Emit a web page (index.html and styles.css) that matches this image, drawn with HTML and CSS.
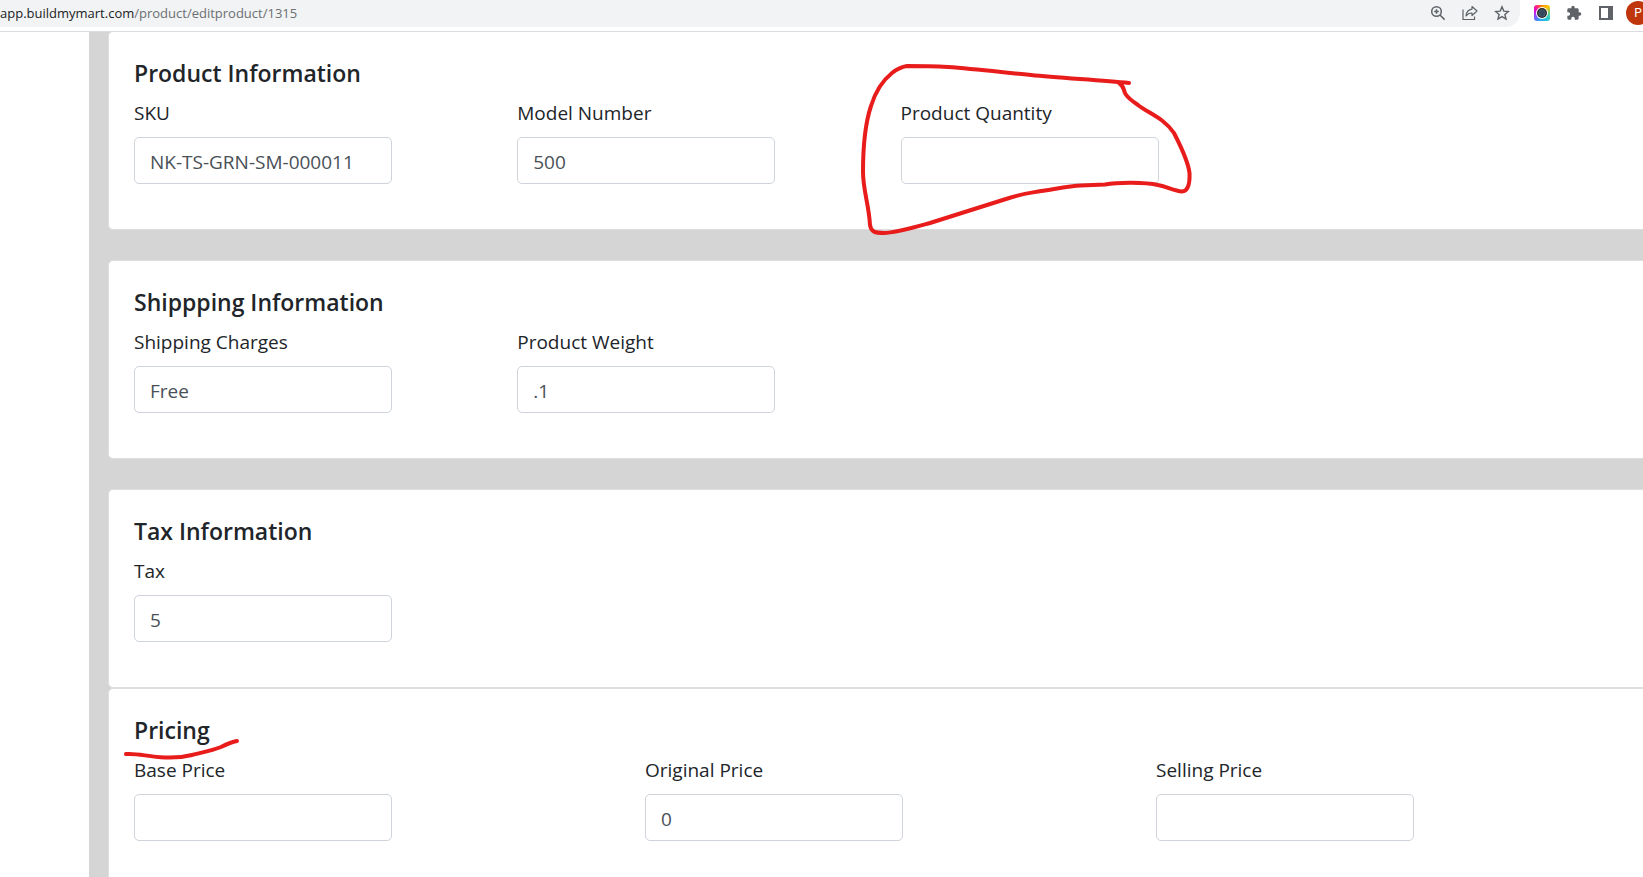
FILE: index.html
```html
<!DOCTYPE html>
<html lang="en">
<head>
  <meta charset="UTF-8">
  <meta name="viewport" content="width=device-width, initial-scale=1.0">
  <title>Edit Product</title>
  <link rel="stylesheet" href="styles.css">
</head>
<body>
  <header class="toolbar">
    <div class="address-bar">
      <div class="url">app.buildmymart.com<span class="url-path">/product/editproduct/1315</span></div>
      <button class="icon-btn" type="button" aria-label="Zoom">
        <svg width="16" height="16" viewBox="0 0 16 16" fill="none" stroke="#5f6368" stroke-width="1.5">
          <circle cx="6.5" cy="6.5" r="4.8"/>
          <path d="M10 10l4.6 4.6M4.2 6.5h4.6M6.5 4.2v4.6"/>
        </svg>
      </button>
      <button class="icon-btn" type="button" aria-label="Share">
        <svg width="16" height="16" viewBox="0 0 16 16" fill="none" stroke="#5f6368" stroke-width="1.2">
          <path d="M1 4.500v10h11.500v-3"/>
          <path d="M10 1.500l5 4.500-5 4.500V8C7.500 8 5.500 8.800 4 11 4.300 7.200 6.400 4.600 10 4.100z" stroke-linejoin="round"/>
        </svg>
      </button>
      <button class="icon-btn" type="button" aria-label="Bookmark">
        <svg width="16" height="16" viewBox="0 0 16 16" fill="none" stroke="#5f6368" stroke-width="1.4">
          <path d="M8 1.900l1.800 4.200 4.600.4-3.500 3 1.100 4.500L8 11.600 4 14l1.100-4.500-3.500-3 4.600-.4z"/>
        </svg>
      </button>
    </div>
    <div class="extensions">
      <button class="icon-btn" type="button" aria-label="Screen capture">
        <span class="capture-icon">
          <svg width="12" height="12" viewBox="0 0 12 12">
            <circle cx="6" cy="6" r="6" fill="#fff"/>
            <circle cx="6" cy="6" r="5" fill="#222"/>
            <circle cx="6" cy="6" r="3.500" fill="#34495e" stroke="#6b7780" stroke-width=".5"/>
          </svg>
        </span>
      </button>
      <button class="icon-btn" type="button" aria-label="Extensions">
        <svg width="16" height="16" viewBox="0 0 24 24" fill="#5f6368">
          <path d="M20.500 11H19V7c0-1.100-.9-2-2-2h-4V3.500a2.500 2.500 0 0 0-5 0V5H4c-1.100 0-2 .9-2 2v3.800h1.500a2.700 2.700 0 0 1 0 5.400H2V20c0 1.100.9 2 2 2h3.800v-1.500a2.700 2.700 0 0 1 5.400 0V22H17c1.100 0 2-.9 2-2v-4h1.500a2.500 2.500 0 0 0 0-5z"/>
        </svg>
      </button>
      <button class="icon-btn" type="button" aria-label="Side panel">
        <svg width="14" height="14" viewBox="0 0 14 14">
          <path d="M0 0h14v14H0zM2 2v10h7V2z" fill="#5f6368" fill-rule="evenodd"/>
        </svg>
      </button>
      <button class="icon-btn avatar" type="button">P</button>
    </div>
  </header>

  <div class="page">
    <aside class="sidebar"></aside>
    <main class="content">
      <section class="card">
        <h2>Product Information</h2>
        <div class="row cols-4">
          <div class="field">
            <label for="sku">SKU</label>
            <input id="sku" type="text" value="NK-TS-GRN-SM-000011">
          </div>
          <div class="field">
            <label for="model">Model Number</label>
            <input id="model" type="text" value="500">
          </div>
          <div class="field">
            <label for="quantity">Product Quantity</label>
            <input id="quantity" type="text">
          </div>
        </div>
      </section>

      <section class="card">
        <h2>Shippping Information</h2>
        <div class="row cols-4">
          <div class="field">
            <label for="shipping">Shipping Charges</label>
            <input id="shipping" type="text" value="Free">
          </div>
          <div class="field">
            <label for="weight">Product Weight</label>
            <input id="weight" type="text" value=".1">
          </div>
        </div>
      </section>

      <section class="card flush">
        <h2>Tax Information</h2>
        <div class="row cols-4">
          <div class="field">
            <label for="tax">Tax</label>
            <input id="tax" type="text" value="5">
          </div>
        </div>
      </section>

      <section class="card">
        <h2>Pricing</h2>
        <div class="row cols-3">
          <div class="field">
            <label for="basePrice">Base Price</label>
            <input id="basePrice" type="text">
          </div>
          <div class="field">
            <label for="originalPrice">Original Price</label>
            <input id="originalPrice" type="text" value="0">
          </div>
          <div class="field">
            <label for="sellingPrice">Selling Price</label>
            <input id="sellingPrice" type="text">
          </div>
        </div>
      </section>
    </main>
  </div>

  <!-- pen marks over the form -->
  <svg class="pen" width="1200" height="770" viewBox="0 0 1200 770">
    <path d="M1129 83C1100 80 1060 78 1031 75C1000 72 975 69 948 67C930 66 920 66 907 66C900 67 897 69 892 73C882 81 875 93 871 106C866 121 863 145 863 172C863 190 869 205 870 225C871 232 875 233 884 233C895 233 912 228 930 223L1006 199C1020 194 1030 193 1041 191C1055 189 1070 186 1081 185.500L1105 184.500C1118 182 1145 182 1158 185C1168 187 1174 191 1182 191.500C1188 191 1190 184 1189.500 173C1188 160 1180 145 1174 133C1164 118 1148 113 1138 105C1132 101 1128 98 1125.500 94C1123 90 1125 87 1119 83"/>
    <path d="M126 754C138 753 148 757 165 757.500C176 758 184 757 192 755C200 753 214 750 221 747C227 744 231 742 237 741"/>
  </svg>
</body>
</html>
```
FILE: styles.css
```css
* {
  box-sizing: border-box;
}
body {
  margin: 0;
  min-height: 100vh;
  display: flex;
  flex-direction: column;
  position: relative;
  overflow: hidden;
  font-family: "Open Sans", "Noto Sans", sans-serif;
  font-size: 19px;
  line-height: 30px;
  color: #212529;
  background: #fff;
}

/* browser toolbar */
.toolbar {
  display: flex;
  position: relative;
  height: 31px;
  padding-bottom: 4px;
  margin-right: -7px;
  background: #fff;
  box-shadow: 0 1px #dadce0;
}
.address-bar {
  flex: 1;
  display: flex;
  align-items: center;
  gap: 8px;
  padding: 0 6px 2px 0;
  background: #f1f3f4;
  border-radius: 0 0 14px 0;
}
.url {
  flex: 1;
  font-size: 13px;
  line-height: 24px;
  color: #202124;
}
.url-path {
  color: #6b6f73;
}
.extensions {
  display: flex;
  align-items: center;
  gap: 8px;
  padding: 0 0 2px 10px;
}
.icon-btn {
  display: flex;
  align-items: center;
  justify-content: center;
  width: 24px;
  height: 24px;
  padding: 0;
  border: none;
  background: none;
}
.capture-icon {
  display: flex;
  align-items: center;
  justify-content: center;
  width: 16px;
  height: 16px;
  border-radius: 3px;
  background: conic-gradient(#ff9100, #ffc400 12%, #4dd0a1 28%, #26c6da 40%, #29a6f6 55%, #8c4dff 68%, #f000d0 82%, #ff3d57 92%, #ff9100);
}
.avatar {
  border-radius: 50%;
  background: #bf360c;
  color: #fff;
  font-family: Roboto, sans-serif;
  font-size: 12px;
}

/* edit form */
.page {
  flex: 1;
  display: flex;
  margin-right: -50px;
}
.sidebar {
  width: 89px;
  background: #fff;
}
.content {
  flex: 1;
  padding-left: 19px;
  background: #d5d5d5;
}
.card {
  margin-bottom: 30px;
  padding: 26px 25px 25px;
  background: #fff;
  border: 1px solid #dedede;
  border-radius: 5px;
}
.card.flush {
  margin-bottom: 0;
}
h2 {
  margin: 0 0 10px;
  font-size: 23px;
  font-weight: 600;
  line-height: 30px;
}
.row {
  display: grid;
}
.cols-4 {
  grid-template-columns: repeat(4, 1fr);
}
.cols-3 {
  grid-template-columns: repeat(3, 1fr);
}
.field {
  margin-bottom: 20px;
}
label {
  display: block;
  margin-bottom: 9px;
}
input {
  display: block;
  width: 258px;
  height: 47px;
  padding: 9px 15px 7px;
  font: inherit;
  color: #495057;
  background: #fff;
  border: 1px solid #ced4da;
  border-radius: 5px;
}

.pen {
  position: absolute;
  top: 0;
  left: 0;
  fill: none;
  stroke: #e91c1c;
  stroke-width: 4;
  stroke-linecap: round;
  stroke-linejoin: round;
  pointer-events: none;
}
```
